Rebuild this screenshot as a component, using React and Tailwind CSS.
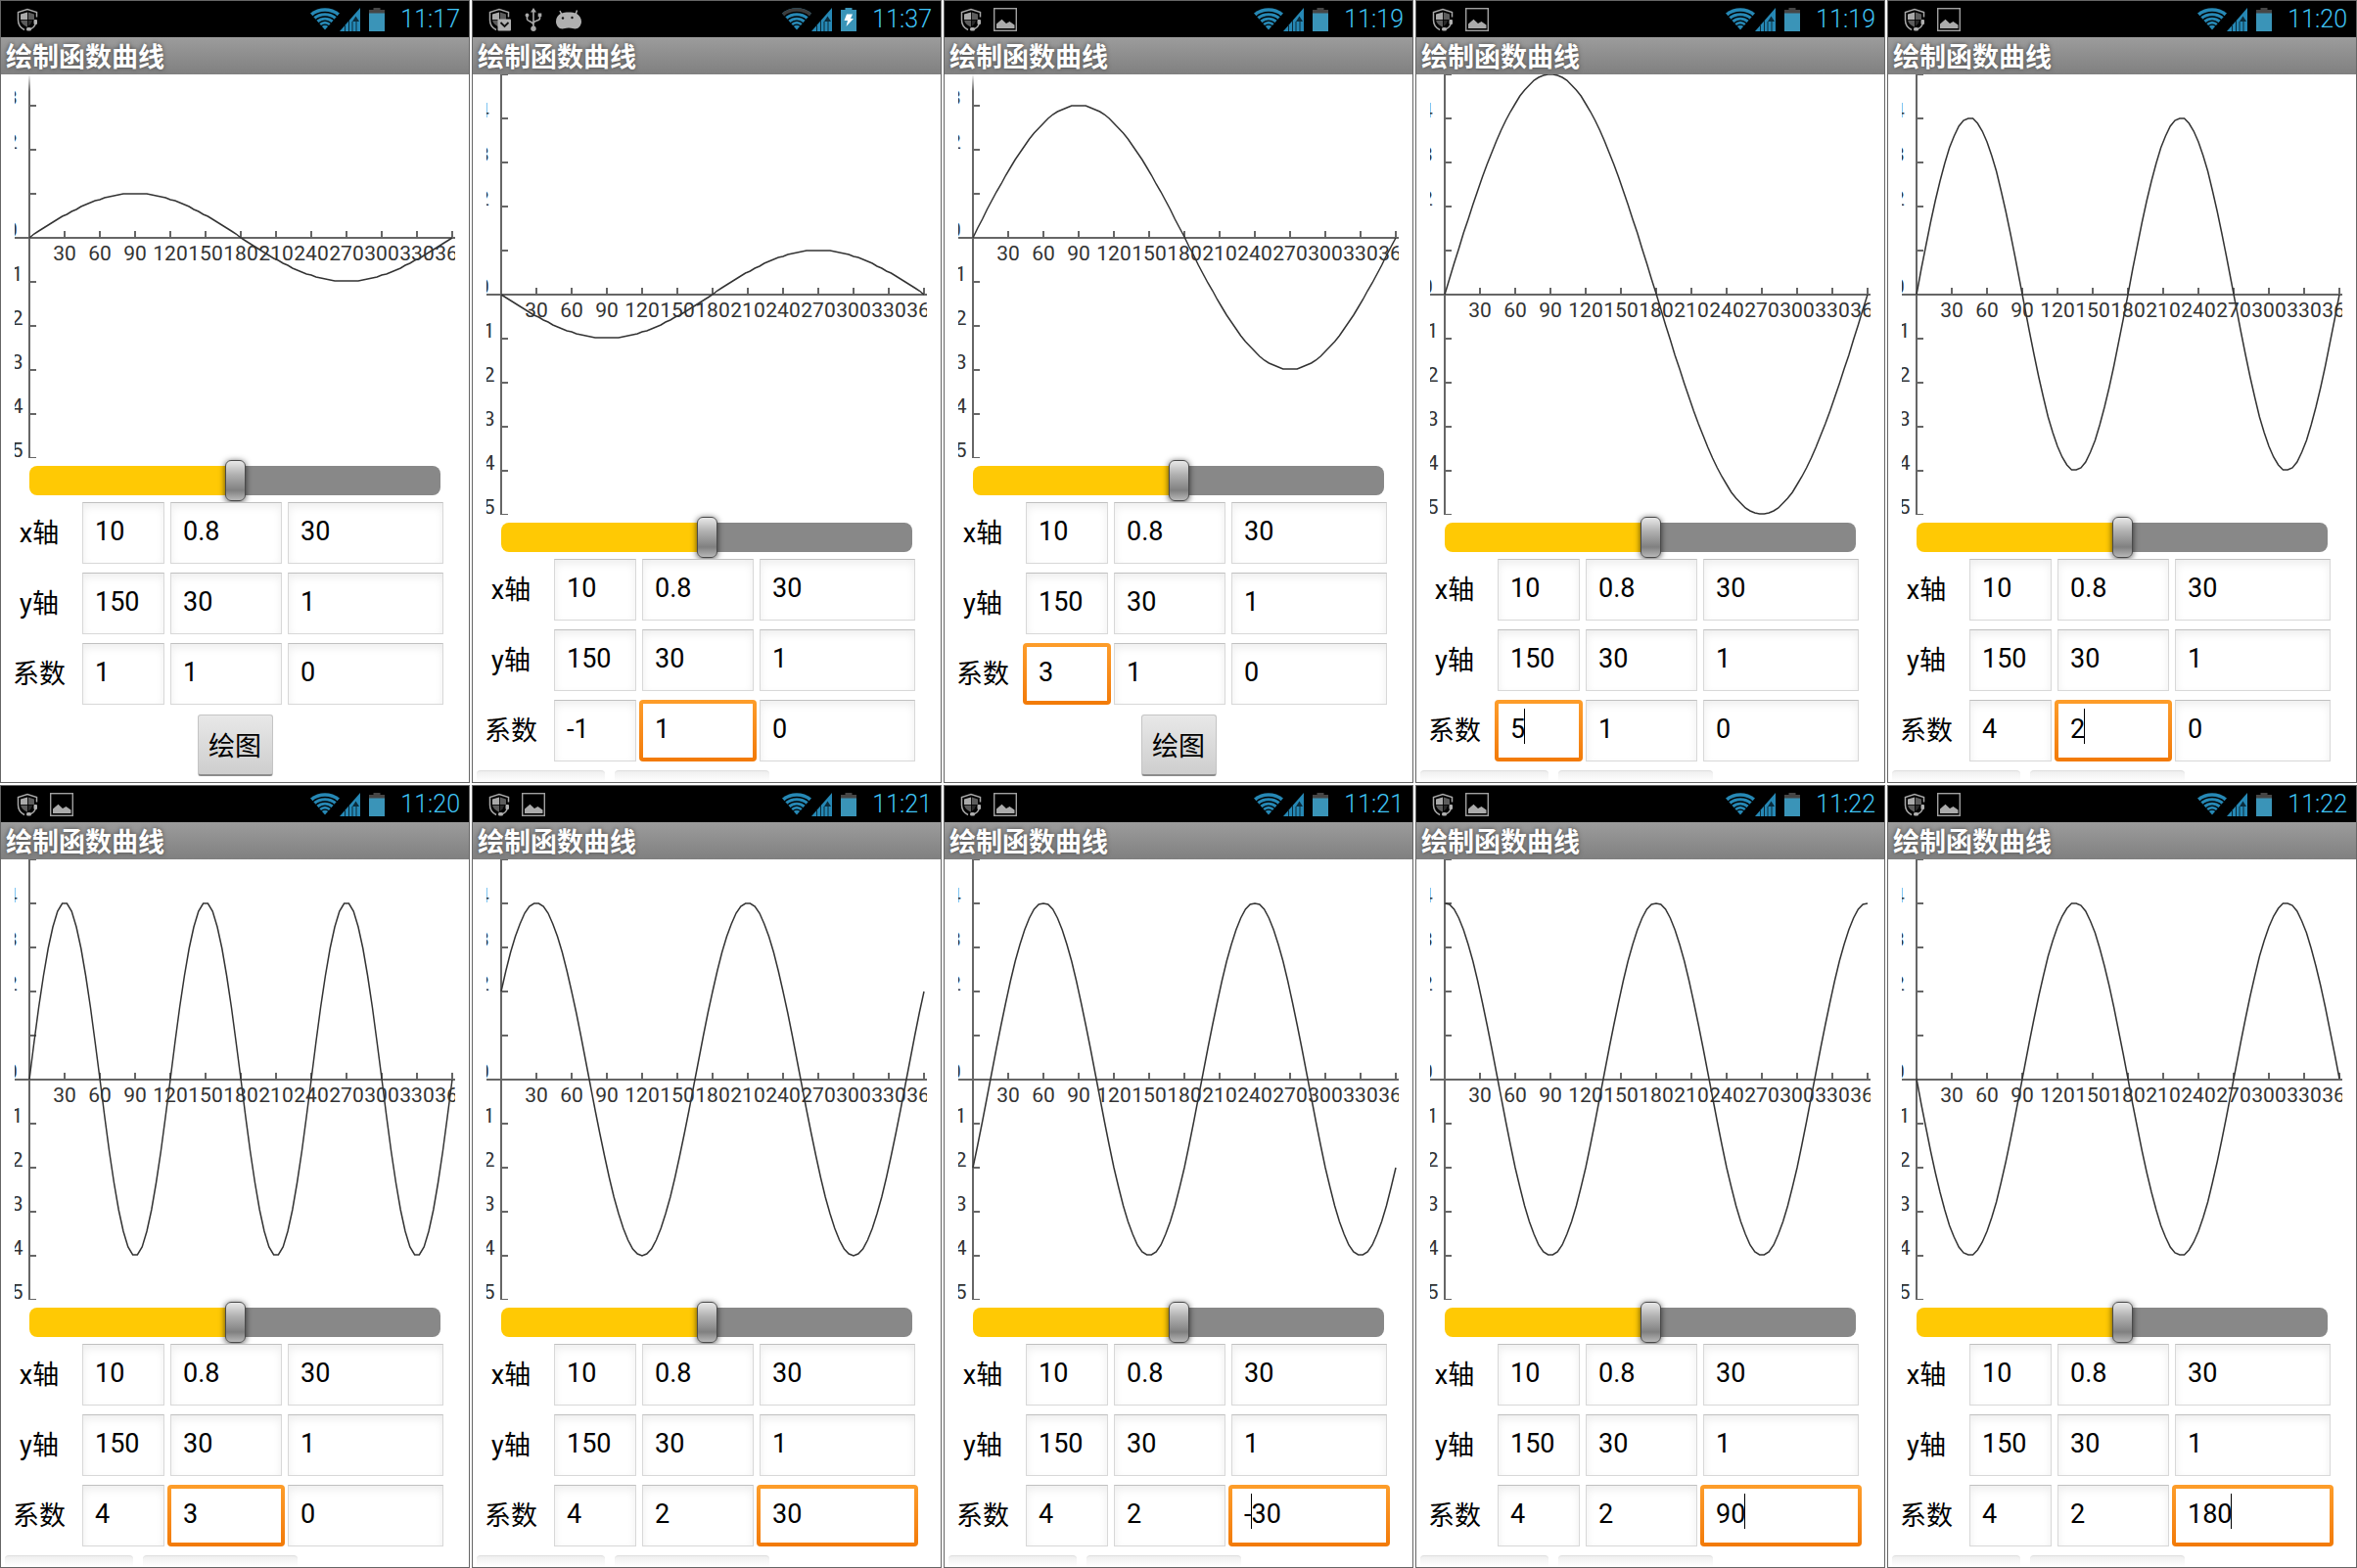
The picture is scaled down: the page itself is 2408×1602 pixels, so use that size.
import React from 'react';
import clsx from 'clsx';

const UNIT = 45; // pixels per 1 on the y axis
const STEP = 36; // pixels per 30 degrees on the x axis
const ORIGIN_X = 15;
const ORIGIN_Y = 225;
const SCROLLED_BY = 58;

const screens = [
  { id: 's1', time: '11:17', coef: ['1', '1', '0'], scrolled: true, icons: ['shield'] },
  { id: 's2', time: '11:37', coef: ['-1', '1', '0'], focus: 1, icons: ['mail', 'usb', 'android'], charging: true, weakWifi: true },
  { id: 's3', time: '11:19', coef: ['3', '1', '0'], focus: 0, scrolled: true, icons: ['shield', 'image'] },
  { id: 's4', time: '11:19', coef: ['5', '1', '0'], focus: 0, caret: 1, icons: ['shield', 'image'] },
  { id: 's5', time: '11:20', coef: ['4', '2', '0'], focus: 1, caret: 1, icons: ['shield', 'image'] },
  { id: 's6', time: '11:20', coef: ['4', '3', '0'], focus: 1, icons: ['shield', 'image'] },
  { id: 's7', time: '11:21', coef: ['4', '2', '30'], focus: 2, icons: ['shield', 'image'] },
  { id: 's8', time: '11:21', coef: ['4', '2', '-30'], focus: 2, caret: 1, icons: ['shield', 'image'] },
  { id: 's9', time: '11:22', coef: ['4', '2', '90'], focus: 2, caret: 2, icons: ['shield', 'image'] },
  { id: 's10', time: '11:22', coef: ['4', '2', '180'], focus: 2, caret: 3, icons: ['shield', 'image'] },
];

const ShieldIcon = ({ mail }) => (
  <svg viewBox="0 0 24 24" className="h-6 w-6" fill="none">
    <path d="M12 4.5v7.5H5V6.5z" fill="#aaaaaa" />
    <path d="M12.8 4.5v7.5H19V6.5z" fill="#5c5c5c" />
    <path d="M5 12.8h7v7C8 18 6 16 5 12.8z" fill="#5c5c5c" />
    <path d="M12.8 12.8h4.5l-2 4-2.5 2z" fill={mail ? '#8a8a8a' : '#2a2a2a'} />
    <path d="M21.5 9.500V4.500L12 1.500 2.500 4.500v8c0 4.500 2.500 8 6.500 10" stroke="#a8a8a8" strokeWidth="1.500" />
    {mail ? (
      <g>
        <rect x="10.500" y="11.500" width="13.500" height="12" rx="1" fill="#b0b0b0" />
        <path d="M13.500 15l4 4 4-4" stroke="#111111" strokeWidth="1.800" />
      </g>
    ) : (
      <g>
        <path d="M20.500 15c-.5 3.500-3 6.300-7 7" stroke="#a8a8a8" strokeWidth="1.500" />
        <rect x="18.500" y="12" width="3.500" height="5" rx="1" fill="#b0b0b0" />
        <rect x="11" y="20" width="5" height="3.500" rx="1.500" fill="#b0b0b0" />
      </g>
    )}
  </svg>
);

const ImageIcon = () => (
  <svg viewBox="0 0 24 24" className="h-6 w-6" fill="none">
    <rect x="0.700" y="0.700" width="22.600" height="22.600" stroke="#a0a0a0" strokeWidth="1.400" />
    <path d="M3 21v-4.500l5.500-4.700 4.500 4.200 3.500-2 5 3.500V21z" fill="#ababab" />
  </svg>
);

const UsbIcon = () => (
  <svg viewBox="0 0 24 24" className="h-6 w-6" fill="none" stroke="#a8a8a8" strokeWidth="1.600">
    <path d="M12 3v18M5.500 8v3.500c0 2.500 6.500 2 6.500 6M18.500 8v3c0 2.500-6.500 1.500-6.500 5" />
    <path d="M12 0l3 4.500H9z" fill="#a8a8a8" stroke="none" />
    <circle cx="12" cy="21.300" r="2.700" fill="#a8a8a8" stroke="none" />
    <circle cx="5.500" cy="7.500" r="1.900" fill="#a8a8a8" stroke="none" />
    <rect x="16.700" y="5.500" width="3.600" height="3.600" fill="#a8a8a8" stroke="none" />
  </svg>
);

const AndroidIcon = () => (
  <svg viewBox="0 0 26 20" className="h-5 w-[26px]" fill="none">
    <path d="M6 5L4 1M20 5l1.500-4.500" stroke="#b0b0b0" strokeWidth="1.500" />
    <path d="M5.500 3.500C9 2 17 2 20.500 3.500c3.500 2 5.500 5 5.500 8.500 0 4-3 7.500-6.500 7.500-2 0-3-1-6.500-1s-4.500 1-6.500 1C3 19.500 0 16 0 12s2-6.500 5.500-8.500z" fill="#b0b0b0" />
    <circle cx="7" cy="8.500" r="1.200" fill="#111111" />
    <circle cx="16.500" cy="8" r="1.200" fill="#111111" />
  </svg>
);

const statusIcons = {
  shield: <ShieldIcon />,
  mail: <ShieldIcon mail />,
  image: <ImageIcon />,
  usb: <UsbIcon />,
  android: <AndroidIcon />,
};

const WifiIcon = ({ weak }) => (
  <svg viewBox="0 0 30 23" className="h-[23px] w-[30px]">
    <path d="M15 22.500L0 5.500C8.500-1.500 21.500-1.500 30 5.500z" fill="#2688b5" />
    {weak && <path d="M3 8.900L0 5.500C8.500-1.500 21.500-1.500 30 5.500l-3 3.400C19.500 3 10.500 3 3 8.900z" fill="#3c3c3c" />}
    <g fill="none" stroke="#000000" strokeWidth="1.300">
      <path d="M2.500 9c7-6 18-6 25 0" />
      <path d="M5.500 12.500c5.500-4.700 13.500-4.700 19 0" />
      <path d="M8.500 15.800c4-3.300 9-3.300 13 0" />
      <path d="M11 18.800c2.500-2 5.500-2 8 0" />
    </g>
  </svg>
);

const SignalIcon = () => (
  <svg viewBox="0 0 21 24" className="h-6 w-[21px]">
    <path d="M0 24L21 0v24z" fill="#2688b5" />
    <path d="M5.500 17v7M9.500 13v11M13 14v10M17 14v10" stroke="#0b2c3b" strokeWidth="1" />
    <path d="M16.500 8.500l3.500 5.500h-7z" fill="#0b2c3b" />
  </svg>
);

const BatteryIcon = ({ charging }) => (
  <svg viewBox="0 0 16 24" className="h-6 w-4">
    <path d="M4.500 0h7v2H16v5H0V2h4.500z" fill={charging ? '#3a94b8' : '#464646'} />
    <rect y="5.500" width="16" height="18.500" fill="#3a94b8" />
    {charging && <path d="M6 6.500h6l-2 4.500h3L5.500 19l1.500-6H3.500z" fill="#ffffff" />}
  </svg>
);

const StatusBar = ({ screen }) => (
  <div className="flex h-[37px] items-center bg-black pl-[15px] pr-[9px]">
    <div className="flex items-center gap-[11px]">
      {screen.icons.map((name) => (
        <span key={name}>{statusIcons[name]}</span>
      ))}
    </div>
    <div className="ml-auto flex items-center">
      <WifiIcon weak={screen.weakWifi} />
      <SignalIcon />
      <span className="ml-[9px]">
        <BatteryIcon charging={screen.charging} />
      </span>
      <span className="ml-4 text-[25px] font-light leading-8 text-[#3fc4f6]">{screen.time}</span>
    </div>
  </div>
);

// One sample every 4 degrees, snapped to whole pixels like the canvas does
function curvePoints([a, b, c]) {
  const points = [];
  for (let deg = 0; deg <= 360; deg += 4) {
    const rad = ((Number(b) * deg + Number(c)) * Math.PI) / 180;
    const x = ORIGIN_X + deg * 1.2;
    const y = Math.floor(ORIGIN_Y - Number(a) * UNIT * Math.sin(rad));
    points.push(`${x},${y}`);
  }
  return points.join(' ');
}

const Plot = ({ screen }) => {
  const top = screen.scrolled ? SCROLLED_BY : 0;
  const xTicks = Array.from({ length: 12 }, (_, i) => i + 1);
  const yTicks = [5, 4, 3, 2, 1, 0, -1, -2, -3, -4, -5];
  const yLabels = yTicks.filter((n) => ORIGIN_Y - n * UNIT > top);

  return (
    <div className="px-[14px]">
      <svg viewBox={`0 ${top} 450 ${450 - top}`} className="block w-full overflow-hidden">
        <g stroke="#666666" strokeWidth="2">
          <path d={`M0 ${ORIGIN_Y}H450M${ORIGIN_X} 0V450`} />
          {xTicks.map((n) => (
            <path key={n} d={`M${ORIGIN_X + n * STEP} ${ORIGIN_Y}v-7`} />
          ))}
          {yTicks.map((n) => (
            <path key={n} d={`M${ORIGIN_X} ${ORIGIN_Y - n * UNIT}h7`} />
          ))}
        </g>
        <g fill="#333333" fontSize="21">
          {xTicks.map((n) => (
            <text key={n} x={ORIGIN_X + n * STEP} y={ORIGIN_Y + 23} textAnchor="middle">
              {n * 30}
            </text>
          ))}
          {yLabels.map((n) => (
            <text key={n} x="-9" y={ORIGIN_Y - n * UNIT - 1}>
              {n}
            </text>
          ))}
        </g>
        <polyline points={curvePoints(screen.coef)} fill="none" stroke="#333333" strokeWidth="1.500" />
        {screen.scrolled && (
          <g>
            <linearGradient id={`${screen.id}-fade`} x1="0" y1="0" x2="0" y2="1">
              <stop offset="0" stopColor="#ffffff" />
              <stop offset="1" stopColor="#ffffff" stopOpacity="0" />
            </linearGradient>
            <rect y={top} width="450" height="17" fill={`url(#${screen.id}-fade)`} />
          </g>
        )}
      </svg>
    </div>
  );
};

// Digits are 15px wide at this size, the minus sign 8px
function caretOffset(text) {
  return 15 + [...text].reduce((sum, ch) => sum + (ch === '-' ? 8 : 15), 0);
}

const Field = ({ id, label, value, focused, caret }) => (
  <div
    className={clsx(
      'relative h-[63px]',
      focused && '-mx-[3px] rounded-[4px] bg-linear-to-b from-[#fd9d2a] to-[#f27a06] p-1'
    )}
  >
    <input
      id={id}
      aria-label={label}
      defaultValue={value}
      className={clsx(
        'block h-full w-full bg-white pb-1 pl-3 text-[27px] text-black outline-none',
        !focused && 'border border-[#d8d8d8] border-t-[#c0c0c0] shadow-[inset_0_4px_8px_#00000012]'
      )}
    />
    {caret && (
      <span className="absolute top-[9px] h-9 w-px bg-black" style={{ left: caretOffset(value.slice(0, caret)) }} />
    )}
  </div>
);

const Screen = ({ screen }) => {
  const rows = [
    { key: 'x', label: 'x轴', values: ['10', '0.8', '30'] },
    { key: 'y', label: 'y轴', values: ['150', '30', '1'] },
    { key: 'k', label: '系数', values: screen.coef, focus: screen.focus },
  ];

  return (
    <section className="flex flex-col overflow-hidden border border-[#666666] bg-white">
      <StatusBar screen={screen} />
      <h2 className="h-[38px] bg-linear-to-b from-[#9c9c9c] to-[#808080] pt-1 pl-[5px] text-[27px] font-bold leading-[34px] text-white [text-shadow:0_0_4px_#444444]">
        绘制函数曲线
      </h2>
      <Plot screen={screen} />

      <div className="mt-[2px] mb-px flex px-[29px]">
        <input
          type="range"
          aria-label="缩放"
          defaultValue={50}
          className="h-[42px] w-full appearance-none bg-transparent [&::-webkit-slider-runnable-track]:h-[30px] [&::-webkit-slider-runnable-track]:rounded-[8px] [&::-webkit-slider-runnable-track]:bg-[linear-gradient(to_right,#ffc904_50%,#888888_50%)] [&::-webkit-slider-thumb]:-mt-[6px] [&::-webkit-slider-thumb]:h-[42px] [&::-webkit-slider-thumb]:w-[21px] [&::-webkit-slider-thumb]:appearance-none [&::-webkit-slider-thumb]:rounded-[6px] [&::-webkit-slider-thumb]:border [&::-webkit-slider-thumb]:border-[#4a4a4a] [&::-webkit-slider-thumb]:bg-[linear-gradient(to_bottom,#e8e8e8,#b0b0b0_35%,#808080_75%,#b8b8b8)] [&::-webkit-slider-thumb]:shadow-[0_1px_6px_#000000b0]"
        />
      </div>

      <div className="grid grid-cols-[65px_84fr_114fr_159fr] gap-x-[6px] gap-y-[9px] pl-3 pr-[26px]">
        {rows.map((row) => (
          <React.Fragment key={row.key}>
            <label
              htmlFor={`${screen.id}-${row.key}-0`}
              className="h-[63px] pt-[2px] pr-[11px] text-center text-[27px] leading-[61px] text-black"
            >
              {row.label}
            </label>
            {row.values.map((value, i) => (
              <Field
                key={i}
                id={`${screen.id}-${row.key}-${i}`}
                label={i > 0 ? `${row.label} ${i + 1}` : undefined}
                value={value}
                focused={row.focus === i}
                caret={row.focus === i ? screen.caret : undefined}
              />
            ))}
          </React.Fragment>
        ))}
      </div>

      {screen.scrolled ? (
        <button className="mx-auto mt-[10px] mb-[6px] h-[63px] w-[77px] rounded-[3px] border border-[#c4c4c4] border-b-2 border-b-[#8c8c8c] bg-linear-to-b from-[#e8e8e8] to-[#cecece] pt-1 text-[27px] leading-none text-black">
          绘图
        </button>
      ) : (
        <div className="mt-[9px] flex gap-[10px] pl-1">
          <button aria-label="绘图" className="h-3 w-[131px] rounded-t-[4px] border-t border-[#dedede] bg-linear-to-b from-[#efefef] to-white" />
          <button aria-label="清除" className="h-3 w-[158px] rounded-t-[4px] border-t border-[#dedede] bg-linear-to-b from-[#efefef] to-white" />
        </div>
      )}
    </section>
  );
};

const App = () => {
  return (
    <main className="grid grid-cols-5 gap-[2px] bg-white font-[Roboto,'Noto_Sans_CJK_SC',sans-serif]">
      {screens.map((screen) => (
        <Screen key={screen.id} screen={screen} />
      ))}
    </main>
  );
};

export default App;
